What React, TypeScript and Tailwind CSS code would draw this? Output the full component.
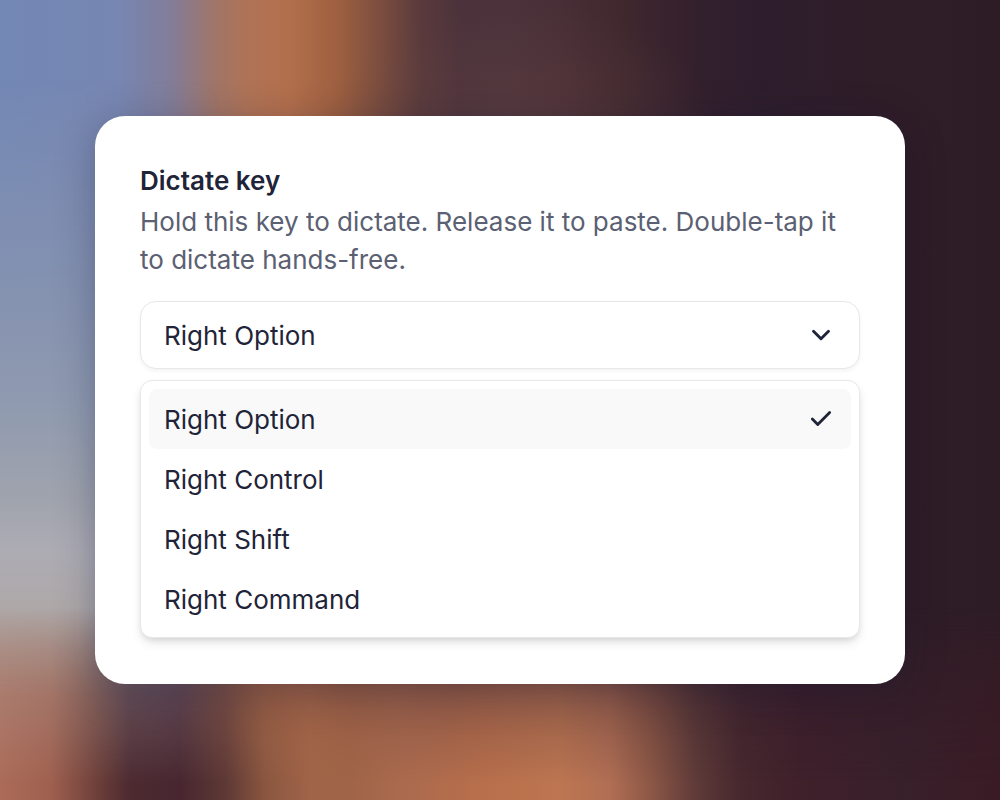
import { useState } from "react";
import type { KeyboardEvent, MouseEvent } from "react";
import { Check, ChevronDown } from "lucide-react";

const keys = ["Right Option", "Right Control", "Right Shift", "Right Command"];

function Backdrop() {
  return (
    <div aria-hidden="true" className="col-start-1 row-start-1 grid">
      {/* Upper sky and columns */}
      <div className="col-start-1 row-start-1 bg-[linear-gradient(90deg,#7388b5_0%,#7786b2_12%,#827d9a_17%,#a07568_21.5%,#b07355_25%,#b36f4c_29%,#9c5f40_34%,#80503f_37.5%,#5a3a3c_42%,#4b323b_46%,#4b323b_51%,#482e36_56%,#40282e_62%,#33202d_70%,#2e1e2d_76%,#2f1d28_88%,#2e1c25_100%)]" />
      {/* Warm spot behind the top edge of the card */}
      <div className="col-start-1 row-start-1 bg-[radial-gradient(ellipse_20%_18%_at_52%_18%,#65454380_0%,#65454300_100%)]" />
      {/* Haze down the left side */}
      <div className="col-start-1 row-start-1 bg-[linear-gradient(180deg,#788cb400_10%,#8592b0_37%,#8f9ab0_50%,#9fa3ad_62%,#adacb4_69%,#aea8a8_76%,#a89c96_85%)] mask-[linear-gradient(90deg,#000_8%,#0008_14%,transparent_22%)]" />
      {/* Lower band */}
      <div className="col-start-1 row-start-1 bg-[linear-gradient(90deg,#ab6b58_0%,#a0604f_5%,#6a3d38_10%,#4c2a30_13%,#47262f_18%,#5d3835_22.5%,#8a5640_26.5%,#a06448_31%,#a06448_35%,#aa6a4e_40%,#b86f4b_48%,#bd7651_56%,#b06e54_61%,#8d5846_65%,#5f3b39_69.5%,#47282e_74%,#3f202b_80%,#38202a_90%,#3a1b25_100%)] mask-[linear-gradient(180deg,transparent_76%,#0005_81%,#000a_87%,#000_98%)]" />
      {/* Dark notch under the card */}
      <div className="col-start-1 row-start-1 bg-[radial-gradient(ellipse_12%_12%_at_35%_85%,#4f303880_0%,#4f303800_100%)]" />
    </div>
  );
}

export default function App() {
  const [selected, setSelected] = useState("Right Option");
  const [open, setOpen] = useState(true);

  const toggle = (event: MouseEvent<HTMLSelectElement>) => {
    event.preventDefault();
    event.currentTarget.focus();
    setOpen(!open);
  };

  const handleKeyDown = (event: KeyboardEvent<HTMLSelectElement>) => {
    if (event.key === "Escape") setOpen(false);
    if (event.key === "Enter" || event.key === " ") {
      event.preventDefault();
      setOpen(!open);
    }
  };

  return (
    <main className="grid min-h-screen bg-[#2e1c25] font-['Inter',sans-serif] text-[26px] text-[#1f2438]">
      <Backdrop />

      <div className="z-10 col-start-1 row-start-1 flex items-center justify-center px-6 py-12">
        <section className="w-full max-w-[810px] rounded-[30px] bg-white px-[45px] py-[46px] shadow-[0_8px_40px_rgba(20,20,50,0.3)]">
          <label htmlFor="dictate-key" className="block leading-[38px] font-semibold">
            Dictate key
          </label>
          <p id="dictate-hint" className="mt-[3px] leading-[38px] text-[#5b6072]">
            Hold this key to dictate. Release it to paste. Double-tap it to dictate hands-free.
          </p>

          {/* Trigger */}
          <div className="mt-[22px] grid items-center">
            <select
              id="dictate-key"
              aria-describedby="dictate-hint"
              value={selected}
              onChange={(event) => setSelected(event.target.value)}
              onMouseDown={toggle}
              onKeyDown={handleKeyDown}
              className="col-start-1 row-start-1 h-[68px] w-full cursor-pointer appearance-none rounded-2xl border border-[#e6e8eb] bg-white px-[23px] shadow-[0_2px_4px_rgba(0,0,0,0.05)] outline-none"
            >
              {keys.map((key) => (
                <option key={key}>{key}</option>
              ))}
            </select>
            <ChevronDown
              strokeWidth={2.3}
              className="pointer-events-none col-start-1 row-start-1 mr-6 size-[30px] justify-self-end"
            />
          </div>

          {/* Options */}
          {open && (
            <ul
              role="listbox"
              aria-label="Dictate key"
              className="mt-[11px] rounded-xl border border-[#e6e8eb] bg-white p-2 shadow-[0_6px_12px_-2px_rgba(0,0,0,0.12),0_3px_6px_-2px_rgba(0,0,0,0.1)]"
            >
              {keys.map((key, index) => (
                <li key={key} role="presentation">
                  <button
                    type="button"
                    role="option"
                    aria-selected={key === selected}
                    onClick={() => {
                      setSelected(key);
                      setOpen(false);
                    }}
                    className={`flex h-[60px] w-full cursor-pointer items-center justify-between rounded-lg px-[15px] text-left hover:bg-[#f9f9f9] ${
                      index === 0 ? "bg-[#f9f9f9]" : ""
                    }`}
                  >
                    {key}
                    {key === selected && <Check strokeWidth={2.6} className="mr-0.5 size-[26px]" />}
                  </button>
                </li>
              ))}
            </ul>
          )}
        </section>
      </div>
    </main>
  );
}
